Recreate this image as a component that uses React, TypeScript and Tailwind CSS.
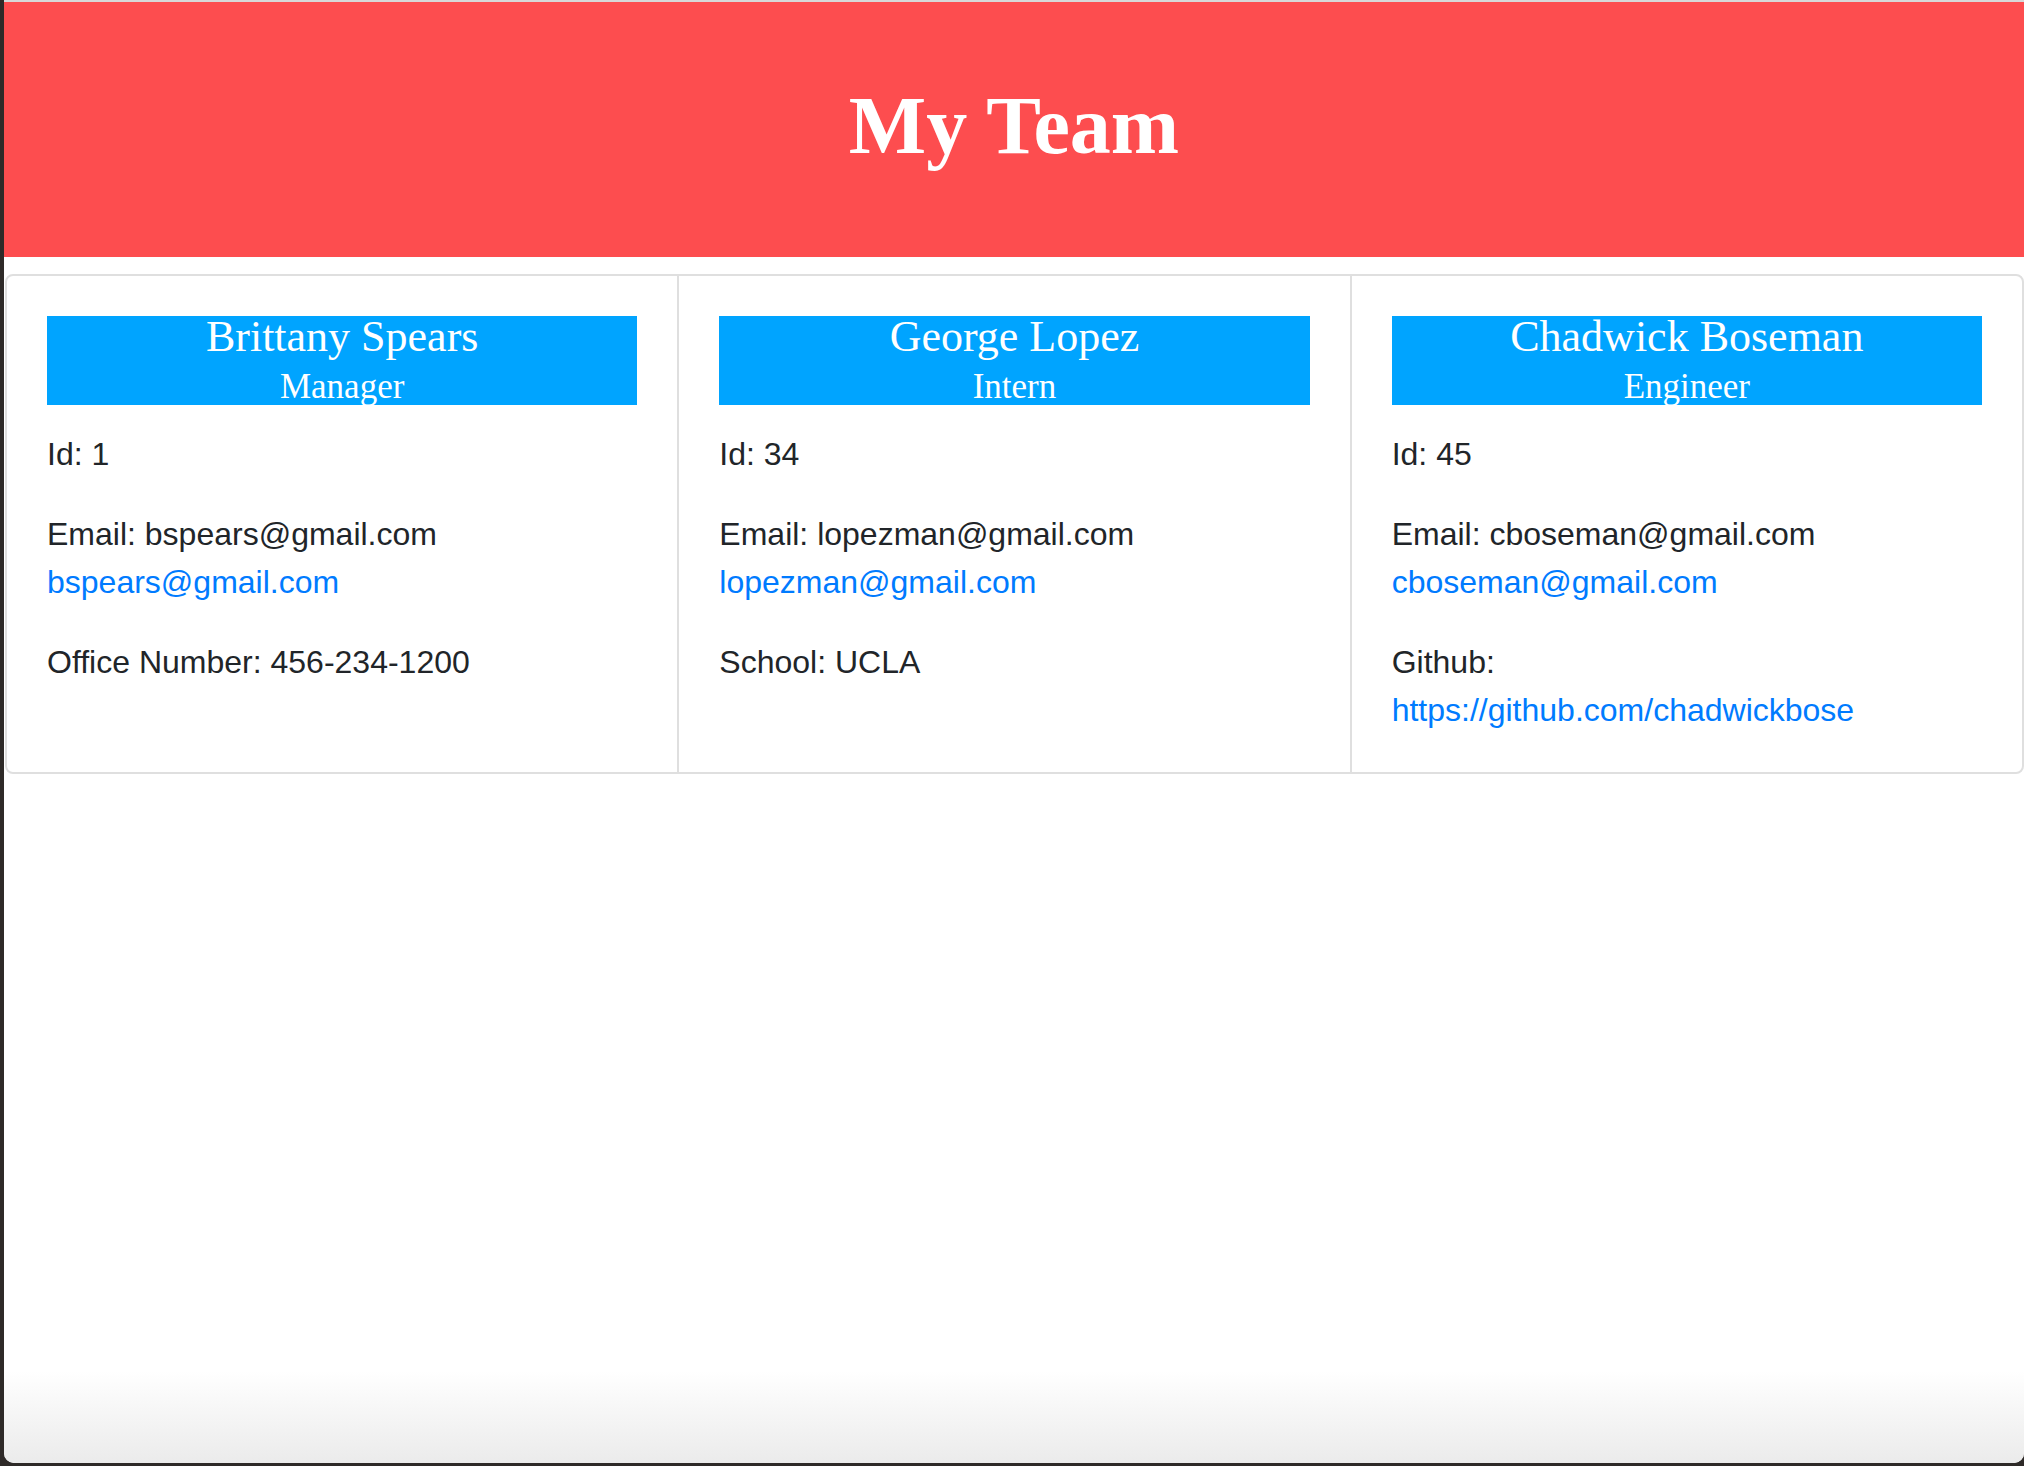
import React from 'react';

type Member = {
  name: string;
  role: string;
  id: number;
  email: string;
  extraLabel: string;
  extraValue: string;
  extraIsLink?: boolean;
};

const team: Member[] = [
  { name: 'Brittany Spears', role: 'Manager', id: 1, email: 'bspears@gmail.com', extraLabel: 'Office Number:', extraValue: '456-234-1200' },
  { name: 'George Lopez', role: 'Intern', id: 34, email: 'lopezman@gmail.com', extraLabel: 'School:', extraValue: 'UCLA' },
  {
    name: 'Chadwick Boseman',
    role: 'Engineer',
    id: 45,
    email: 'cboseman@gmail.com',
    extraLabel: 'Github:',
    extraValue: 'https://github.com/chadwickbose',
    extraIsLink: true,
  },
];

const MemberCard: React.FC<{ member: Member; first?: boolean }> = ({ member, first }) => (
  <div className={`flex-1 px-[40px] pt-[40px] pb-[38px] ${first ? '' : 'border-l-2 border-[#dfdfdf]'}`}>
    {/* Name banner */}
    <div className="h-[89px] bg-[#00a4ff] text-white text-center font-['Liberation_Serif',serif]">
      <div className="text-[44px] leading-[40px] pt-[1px]">{member.name}</div>
      <div className="text-[35px] leading-[40px] mt-[10px]">{member.role}</div>
    </div>

    <p className="mt-[25px] mb-[32px]">Id: {member.id}</p>
    <p className="mb-[32px]">
      Email: {member.email}
      <br />
      <a href={`mailto:${member.email}`} className="text-[#007bff]">
        {member.email}
      </a>
    </p>
    {member.extraIsLink ? (
      <p>
        {member.extraLabel}
        <br />
        <a href={member.extraValue} className="text-[#007bff]">
          {member.extraValue}
        </a>
      </p>
    ) : (
      <p>
        {member.extraLabel} {member.extraValue}
      </p>
    )}
  </div>
);

export default function App() {
  return (
    <div className="w-full h-[1466px] bg-[#2e2a28] flex flex-col">
      <div className="flex-1 ml-[4px] mb-[3px] bg-white border-t-2 border-[#d8d8d8] rounded-b-[10px] overflow-hidden flex flex-col font-['Liberation_Sans',Arial,sans-serif] text-[32px] leading-[48px] text-[#212529]">
        {/* Header */}
        <header className="h-[255px] bg-[#fd4d4f] pt-[75px]">
          <h1 className="text-center text-white font-bold text-[82px] leading-[98px] font-['Liberation_Serif',serif]">
            My Team
          </h1>
        </header>

        {/* Cards */}
        <div className="mt-[17px] ml-[1px] flex border-2 border-[#dfdfdf] rounded-[8px]">
          {team.map((m, i) => (
            <MemberCard key={m.id} member={m} first={i === 0} />
          ))}
        </div>

        <div className="mt-auto h-[92px] bg-linear-to-b from-white to-[#ebebeb]" />
      </div>
    </div>
  );
}
